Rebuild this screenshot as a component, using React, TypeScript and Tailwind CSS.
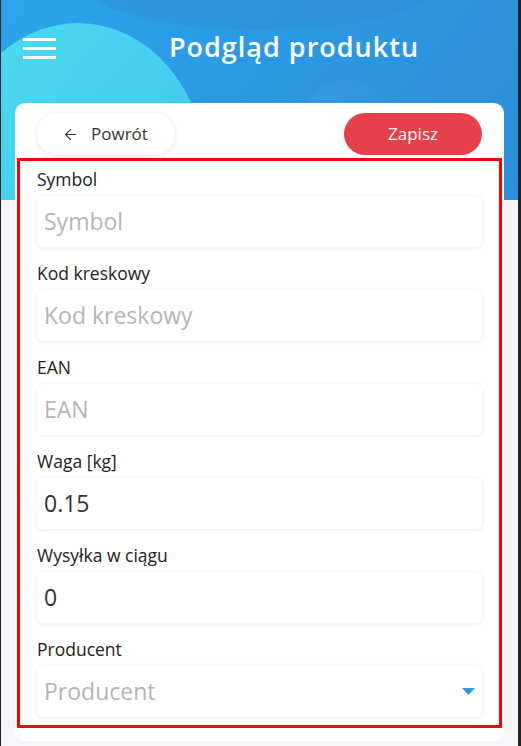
import { ArrowLeft } from "lucide-react";

type field = {
  label: string;
  value?: string;
  placeholder: string;
  select?: boolean;
};

const fields: field[] = [
  { label: "Symbol", placeholder: "Symbol" },
  { label: "Kod kreskowy", placeholder: "Kod kreskowy" },
  { label: "EAN", placeholder: "EAN" },
  { label: "Waga [kg]", placeholder: "Waga", value: "0.15" },
  { label: "Wysyłka w ciągu", placeholder: "Wysyłka", value: "0" },
  { label: "Producent", placeholder: "Producent", select: true },
];

const HeaderBg = () => {
  return (
    <svg
      className="absolute inset-0 h-full w-full"
      viewBox="0 0 517 200"
      preserveAspectRatio="none"
    >
      <defs>
        <linearGradient id="bg" x1="0" y1="0" x2="1" y2="0.3">
          <stop offset="0" stopColor="#2ba3ec" />
          <stop offset="1" stopColor="#2b91df" />
        </linearGradient>
        <linearGradient id="blob" x1="0" y1="0" x2="1" y2="1">
          <stop offset="0" stopColor="#4cdcf1" />
          <stop offset="1" stopColor="#3cc3ec" />
        </linearGradient>
      </defs>
      <rect width="517" height="200" fill="url(#bg)" />
      <ellipse cx="260" cy="-20" rx="180" ry="50" fill="#2a8ad8" opacity="0.35" />
      <circle cx="345" cy="125" r="45" fill="#3a9fe6" opacity="0.35" />
      <ellipse cx="77" cy="173" rx="128" ry="150" fill="url(#blob)" />
    </svg>
  );
};

const Field = ({ f }: { f: field }) => {
  return (
    <div className="flex flex-col">
      <label className="mb-[6px] h-[22px] text-[17.5px] leading-[22px] text-[#222]">
        {f.label}
      </label>
      <div className="flex h-[51px] items-center justify-between rounded-md bg-white pr-[7px] pl-[7px] shadow-[0_1px_5px_rgba(0,0,0,0.09)]">
        {f.value ? (
          <span className="text-[23px] text-[#333]">{f.value}</span>
        ) : (
          <span className="text-[23px] text-[#b5b5b5]">{f.placeholder}</span>
        )}
        {f.select && (
          <svg width="13" height="7" viewBox="0 0 13 7">
            <path d="M0 0 L13 0 L6.5 7 Z" fill="#2d98e6" />
          </svg>
        )}
      </div>
    </div>
  );
};

export default function App() {
  return (
    <div
      className="flex h-[746px] w-[521px] overflow-hidden bg-[#222] pr-[3px] pl-[1px]"
      style={{ fontFamily: "'Open Sans', Lato, sans-serif" }}
    >
      <div className="flex flex-1 flex-col bg-[#f3f5f8]">
        <header className="relative h-[200px] shrink-0 overflow-hidden">
          <HeaderBg />
          <div className="relative flex h-[95px] items-center">
            <div className="flex w-[69px] flex-col gap-[6px] pt-[2px] pl-[22px]">
              <span className="h-[3px] w-[33px] bg-white" />
              <span className="h-[3px] w-[33px] bg-white" />
              <span className="h-[3px] w-[33px] bg-white" />
            </div>
            <h1 className="flex-1 text-center text-[27px] font-semibold tracking-[1px] text-white">
              Podgląd produktu
            </h1>
          </div>
        </header>

        <div className="relative z-10 mx-[14px] -mt-[97px] mb-[5px] flex flex-1 flex-col rounded-[10px] bg-white px-[2px] pb-[13px]">
          <div className="flex items-center justify-between px-[20px] pt-[10px] pb-[3px]">
            <button className="flex h-[42px] w-[138px] items-center gap-[12px] rounded-full bg-white pl-[25px] text-[17px] text-[#333] shadow-[0_1px_6px_rgba(0,0,0,0.1)]">
              <ArrowLeft size={17} strokeWidth={1.5} />
              Powrót
            </button>
            <button className="h-[42px] w-[138px] rounded-full bg-[#e8404b] text-[17px] text-white">
              Zapisz
            </button>
          </div>

          <div className="flex flex-col gap-[15px] border-[3px] border-[#ff0000] px-[17px] pt-[7px] pb-[8px]">
            {fields.map((f) => (
              <Field key={f.label} f={f} />
            ))}
          </div>
        </div>
      </div>
    </div>
  );
}
